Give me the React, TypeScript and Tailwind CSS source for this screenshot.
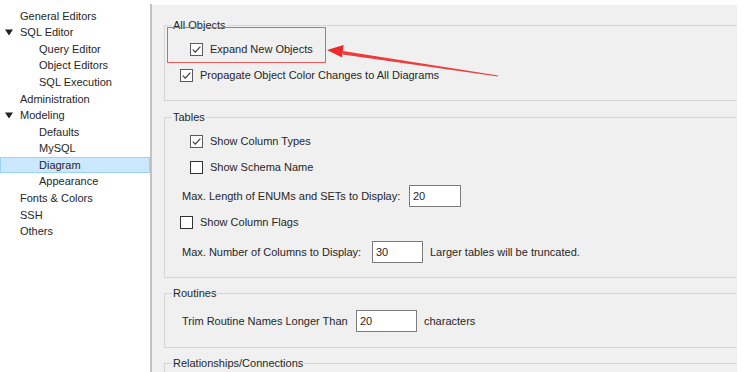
import React from 'react';

type TreeItem = { label: string; level: 1 | 2; open?: boolean; selected?: boolean };

const tree: TreeItem[] = [
  { label: 'General Editors', level: 1 },
  { label: 'SQL Editor', level: 1, open: true },
  { label: 'Query Editor', level: 2 },
  { label: 'Object Editors', level: 2 },
  { label: 'SQL Execution', level: 2 },
  { label: 'Administration', level: 1 },
  { label: 'Modeling', level: 1, open: true },
  { label: 'Defaults', level: 2 },
  { label: 'MySQL', level: 2 },
  { label: 'Diagram', level: 2, selected: true },
  { label: 'Appearance', level: 2 },
  { label: 'Fonts & Colors', level: 1 },
  { label: 'SSH', level: 1 },
  { label: 'Others', level: 1 },
];

function Checkbox({ checked }: { checked?: boolean }) {
  return (
    <span className={`w-[13px] h-[13px] shrink-0 bg-white border ${checked ? 'border-[#5a5a5a]' : 'border-[#333]'} flex items-center justify-center`}>
      {checked && (
        <svg width="11" height="11" viewBox="0 0 11 11">
          <path d="M1.8 5.6 L4.3 8.1 L9.4 2.6" fill="none" stroke="#3a3a3a" strokeWidth="1.2" />
        </svg>
      )}
    </span>
  );
}

function CheckRow({ label, checked, indent }: { label: string; checked?: boolean; indent: string }) {
  return (
    <div className={`h-[20px] flex items-center ${indent}`}>
      <Checkbox checked={checked} />
      <span className="ml-[7px]">{label}</span>
    </div>
  );
}

function NumberBox({ value, w }: { value: string; w: string }) {
  return (
    <span className={`${w} h-[22px] shrink-0 bg-white border border-[#7d7d7d] flex items-center pl-[3px]`}>{value}</span>
  );
}

function Group({ title, h, mt, children }: { title: string; h: string; mt: string; children?: React.ReactNode }) {
  return (
    <div className={`relative ${h} ${mt} border border-r-0 border-[#d6d6d6] shrink-0`}>
      <span className="absolute left-[7px] top-[-8px] h-[14px] leading-[14px] px-[1px] bg-[#f0f0f0]">{title}</span>
      {children}
    </div>
  );
}

export default function App() {
  return (
    <div className="relative w-[748px] h-[372px] overflow-hidden bg-white flex font-['Liberation_Sans',Arial,sans-serif] text-[11px] text-[#262626]">
      {/* tree */}
      <div className="w-[152px] shrink-0 flex flex-col">
        <div className="mt-[4px] flex-1 border-r-2 border-[#c2c2c2] pt-[3.5px]">
          {tree.map((t) => (
            <div
              key={t.label}
              className={`h-[16.6px] flex items-center border ${t.selected ? 'bg-[#cce8ff] border-[#99d1ff]' : 'border-transparent'}`}
            >
              {t.level === 1 ? (
                <>
                  <span className="w-[19px] shrink-0 flex justify-start pl-[4px]">
                    {t.open && (
                      <svg width="8" height="7" viewBox="0 0 8 7">
                        <path d="M0 0.5 H8 L4 6.5 Z" fill="#222" />
                      </svg>
                    )}
                  </span>
                  <span>{t.label}</span>
                </>
              ) : (
                <span className="pl-[38px]">{t.label}</span>
              )}
            </div>
          ))}
        </div>
      </div>

      {/* settings */}
      <div className="mt-[5px] mr-[11px] flex-1 bg-[#f0f0f0] overflow-hidden pl-[12px] pt-[20px] flex flex-col">
        <Group title="All Objects" h="h-[76px]" mt="mt-0">
          <div className="pt-[13px]">
            <CheckRow label="Expand New Objects" checked indent="pl-[25px]" />
            <div className="mt-[6px]">
              <CheckRow label="Propagate Object Color Changes to All Diagrams" checked indent="pl-[15px]" />
            </div>
          </div>
        </Group>

        <Group title="Tables" h="h-[161px]" mt="mt-[16px]">
          <div className="pt-[13px]">
            <CheckRow label="Show Column Types" checked indent="pl-[25px]" />
            <div className="mt-[6px]">
              <CheckRow label="Show Schema Name" indent="pl-[25px]" />
            </div>
            <div className="mt-[8px] h-[22px] flex items-center pl-[17px]">
              <span className="w-[227px] shrink-0">Max. Length of ENUMs and SETs to Display:</span>
              <NumberBox value="20" w="w-[52px]" />
            </div>
            <div className="mt-[5px]">
              <CheckRow label="Show Column Flags" indent="pl-[15px]" />
            </div>
            <div className="mt-[9px] h-[22px] flex items-center pl-[17px]">
              <span className="w-[190px] shrink-0">Max. Number of Columns to Display:</span>
              <NumberBox value="30" w="w-[51px]" />
              <span className="ml-[7px]">Larger tables will be truncated.</span>
            </div>
          </div>
        </Group>

        <Group title="Routines" h="h-[55px]" mt="mt-[15px]">
          <div className="pt-[16px] h-[38px] flex items-center pl-[17px]">
            <div className="h-[22px] flex items-center">
              <span className="w-[174px] shrink-0">Trim Routine Names Longer Than</span>
              <NumberBox value="20" w="w-[61px]" />
              <span className="ml-[7px]">characters</span>
            </div>
          </div>
        </Group>

        <Group title="Relationships/Connections" h="h-[40px]" mt="mt-[15px]" />
      </div>

      {/* annotation */}
      <div className="absolute left-[167px] top-[27px] w-[159px] h-[36px] border-[1.5px] border-[#ee5b5b] pointer-events-none" />
      <svg className="absolute left-0 top-0 pointer-events-none" width="748" height="372" viewBox="0 0 748 372">
        <polygon points="343,51 498,75.5 498,76.5 342.5,54.5" fill="#ef3b3b" />
        <polygon points="327,50 343.6,45 342.1,57.5" fill="#ec2a2a" />
      </svg>
    </div>
  );
}
